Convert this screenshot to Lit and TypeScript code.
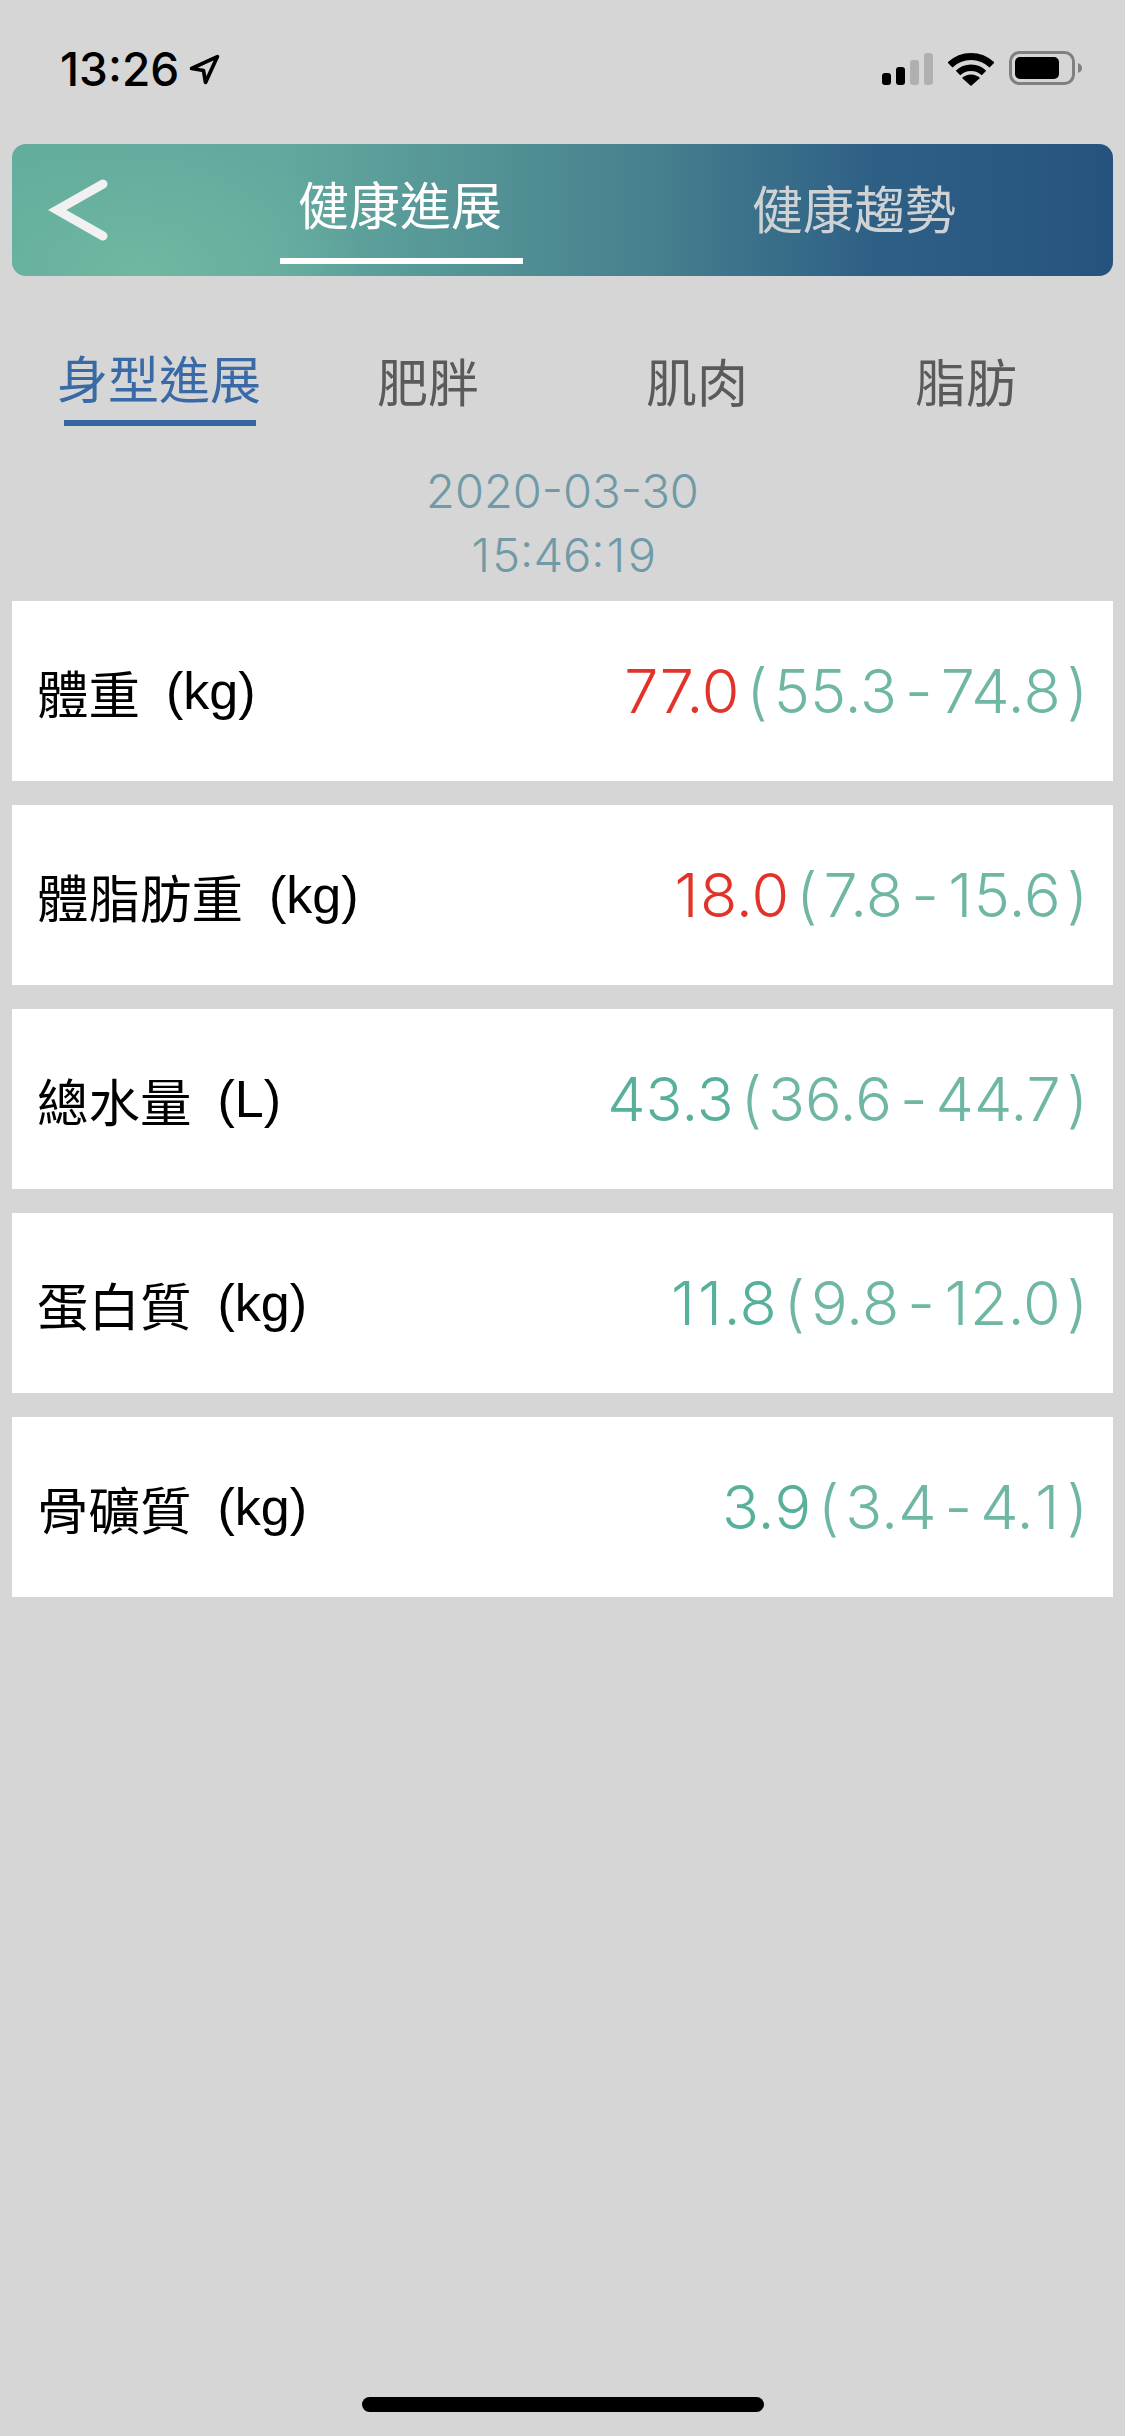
import { LitElement, html, css } from "lit";
import { customElement } from "lit/decorators.js";

const rows = [
  { label: "體重", unit: "(kg)", value: "77.0", low: "55.3", high: "74.8", bad: true },
  { label: "體脂肪重", unit: "(kg)", value: "18.0", low: "7.8", high: "15.6", bad: true },
  { label: "總水量", unit: "(L)", value: "43.3", low: "36.6", high: "44.7", bad: false },
  { label: "蛋白質", unit: "(kg)", value: "11.8", low: "9.8", high: "12.0", bad: false },
  { label: "骨礦質", unit: "(kg)", value: "3.9", low: "3.4", high: "4.1", bad: false },
];

/** The reference's digit 1 is wider than Inter's, so each one gets a little side room. */
const num = (text: string) =>
  text.split("").map((c) => (c === "1" ? html`<span class="one">1</span>` : c));

@customElement("app-root")
export class AppRoot extends LitElement {
  static styles = css`
    :host {
      display: flex;
      flex-direction: column;
      width: 1125px;
      height: 2436px;
      background: #d6d6d6;
      font-family: "Inter", "Liberation Sans", "Noto Sans CJK TC", sans-serif;
      overflow: hidden;
    }
    .one { margin: 0 0.05em; }
    .status {
      height: 144px;
      box-sizing: border-box;
      padding: 49px 42px 0 60px;
      display: flex;
      justify-content: space-between;
      align-items: flex-start;
    }
    .clock {
      display: flex;
      align-items: center;
      gap: 10px;
      font-size: 46px;
      line-height: 40px;
      font-weight: 500;
      color: #000;
    }
    .indicators { display: flex; align-items: center; gap: 15px; height: 40px; }
    .header {
      margin: 0 12px;
      height: 132px;
      border-radius: 14px;
      background:
        radial-gradient(ellipse 220px 150px at 130px 132px, #6fb8a2 0%, rgba(111, 184, 162, 0) 100%),
        linear-gradient(90deg, #62ad9d 0%, #62a89e 25%, #47808e 58%, #2e6086 78%, #26537e 100%);
      display: flex;
      align-items: stretch;
      padding-left: 36px;
    }
    .back { width: 62px; display: flex; align-items: center; }
    .htabs { flex: 1; display: grid; grid-template-columns: 243px 243px; column-gap: 211px; padding-left: 170px; }
    .htab {
      height: 120px;
      display: flex;
      align-items: center;
      justify-content: center;
      font-size: 51px;
      font-weight: 400;
      color: #ced2d4;
      white-space: nowrap;
      padding: 6px 3px 0 0;
      box-sizing: border-box;
    }
    .htab.on { color: #fff; border-bottom: 6px solid #fff; padding-top: 3px; }
    .stabs {
      display: grid;
      grid-template-columns: repeat(4, 269px);
      padding: 0 24.5px;
      margin-top: 72px;
    }
    .stab {
      display: flex;
      flex-direction: column;
      align-items: center;
      font-size: 51px;
      line-height: 72px;
      font-weight: 400;
      color: #5a5a5a;
    }
    .stab.on { color: #3a6aa5; }
    .stab.on span { position: relative; top: -3px; }
    .stab i { display: block; width: 192px; height: 6px; margin-left: 2px; }
    .stab.on i { background: #36659f; }
    .stamp {
      margin-top: 33px;
      text-align: center;
      font-size: 47px;
      line-height: 64px;
      color: #6f9aa6;
      font-weight: 300;
    }
    .list { display: flex; flex-direction: column; gap: 24px; margin: 14px 12px 0; }
    .row {
      height: 180px;
      background: #fff;
      display: flex;
      align-items: center;
      justify-content: space-between;
      padding: 0 25px;
      box-sizing: border-box;
    }
    .label { font-size: 51.5px; color: #000; font-weight: 400; display: flex; gap: 26px; align-items: center; }
    .unit { font-size: 52px; font-family: "Liberation Sans", sans-serif; }
    .reading {
      font-size: 61px;
      font-weight: 300;
      color: #6fb7a4;
      display: flex;
      align-items: center;
      white-space: nowrap;
    }
    .reading .one { margin: 0 0.025em; }
    .value { color: #57b09b; margin-right: 7px; }
    .value.bad { color: #e2332a; }
    .paren-open { margin-right: 6px; }
    .paren-close { margin-left: 6px; }
    .dash { margin: 0 8px; }
    .home-wrap { flex: 1; display: flex; align-items: flex-end; justify-content: center; padding-bottom: 24px; }
    .home { width: 402px; height: 15px; border-radius: 7.5px; background: #000; }
  `;

  private status() {
    return html`<div class="status">
      <div class="clock">
        <span>13:26</span>
        <svg width="31" height="31" viewBox="0 0 30 30">
          <path d="M2.5 14 L27.5 2.5 L16 27.5 L14 16 Z" fill="none" stroke="#000" stroke-width="3.6" stroke-linejoin="round" />
        </svg>
      </div>
      <div class="indicators">
        <svg width="51" height="33" viewBox="0 0 51 33">
          <rect x="0" y="20" width="9" height="12" rx="3" fill="#000" />
          <rect x="14" y="14" width="9" height="18" rx="3" fill="#000" />
          <rect x="28" y="7" width="9" height="25" rx="3" fill="#b0b0b0" />
          <rect x="42" y="0" width="9" height="32" rx="3" fill="#b0b0b0" />
        </svg>
        <svg width="46" height="34" viewBox="0 0 46 34">
          <path d="M2 13 A30 30 0 0 1 44 13" fill="none" stroke="#000" stroke-width="7" />
          <path d="M10 21 A19 19 0 0 1 36 21" fill="none" stroke="#000" stroke-width="6.5" />
          <path d="M23 34 L14 26 A13 13 0 0 1 32 26 Z" fill="#000" />
        </svg>
        <svg width="74" height="36" viewBox="0 0 74 36">
          <rect x="1.5" y="1.5" width="63" height="31" rx="9" fill="none" stroke="#808080" stroke-width="3" />
          <rect x="6" y="6" width="44" height="22" rx="5" fill="#000" />
          <path d="M69 12 C72 13 73 15 73 17 C73 19 72 21 69 22 Z" fill="#808080" />
        </svg>
      </div>
    </div>`;
  }

  render() {
    return html`
      ${this.status()}
      <div class="header">
        <div class="back">
          <svg width="62" height="66" viewBox="0 0 62 66">
            <path d="M55 7 L9 33 L55 59" fill="none" stroke="#f1f1f1" stroke-width="9" stroke-linecap="round" stroke-linejoin="miter" />
          </svg>
        </div>
        <div class="htabs">
          <div class="htab on">健康進展</div>
          <div class="htab">健康趨勢</div>
        </div>
      </div>
      <div class="stabs">
        <div class="stab on"><span>身型進展</span><i></i></div>
        <div class="stab"><span>肥胖</span><i></i></div>
        <div class="stab"><span>肌肉</span><i></i></div>
        <div class="stab"><span>脂肪</span><i></i></div>
      </div>
      <div class="stamp">2020-03-30<br />${num("15:46:19")}</div>
      <div class="list">
        ${rows.map(
          (r) => html`<div class="row">
            <div class="label"><span>${r.label}</span><span class="unit">${r.unit}</span></div>
            <div class="reading">
              <span class="value ${r.bad ? "bad" : ""}">${num(r.value)}</span>
              <span class="paren-open">(</span><span>${num(r.low)}</span><span class="dash">-</span><span>${num(r.high)}</span><span class="paren-close">)</span>
            </div>
          </div>`
        )}
      </div>
      <div class="home-wrap"><div class="home"></div></div>
    `;
  }
}
